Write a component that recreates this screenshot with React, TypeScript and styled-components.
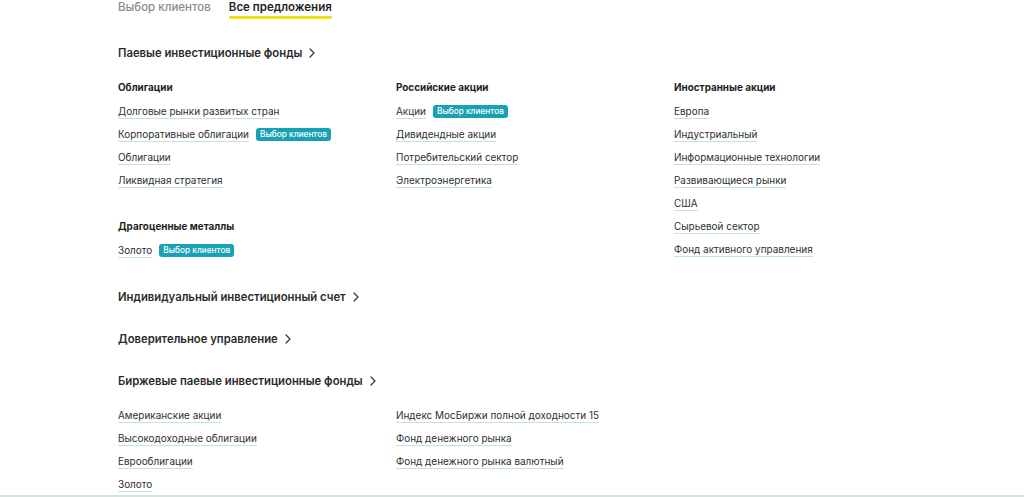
import React from "react";
import styled, { createGlobalStyle } from "styled-components";

const GlobalStyle = createGlobalStyle`
	html, body {
		margin: 0;
		padding: 0;
		background: #ffffff;
		font-family: Inter, "Noto Sans", "Liberation Sans", sans-serif;
		overflow: hidden;
	}
`;

const Page = styled.div`
	box-sizing: border-box;
	height: 497px;
	padding-left: 118px;
	border-bottom: 2px solid #d4e3df;
	overflow: hidden;
`;

const Tabs = styled.div`
	display: flex;
	gap: 18px;
`;

const Tab = styled.div<{ $active?: boolean }>`
	font-size: 11.5px;
	line-height: 14px;
	font-weight: ${(p) => (p.$active ? 600 : 500)};
	color: ${(p) => (p.$active ? "#1f1f1f" : "#8b8b8b")};
	padding-bottom: 2px;
	border-bottom: 3px solid ${(p) => (p.$active ? "#f2df14" : "transparent")};
	border-radius: 0 0 2px 2px;
`;

const Section = styled.section`
	margin-top: 24px;

	& + & {
		margin-top: 22px;
	}
`;

const SectionTitle = styled.div`
	display: flex;
	align-items: center;
	gap: 6px;
	height: 20px;
	font-size: 11.3px;
	font-weight: 600;
	color: #2b2b2b;
`;

const Columns = styled.div`
	display: grid;
	grid-template-columns: 278px 278px 278px;
	margin-top: 16px;
`;

const Column = styled.div`
	display: flex;
	flex-direction: column;
	gap: 23px;
`;

const Group = styled.div`
	display: flex;
	flex-direction: column;
`;

const GroupTitle = styled.div`
	height: 24px;
	line-height: 16px;
	font-size: 9.9px;
	font-weight: 700;
	color: #1f1f1f;
`;

const Row = styled.div`
	box-sizing: border-box;
	height: 23px;
	padding-top: 2px;
	display: flex;
	align-items: flex-start;
`;

const Link = styled.a`
	display: inline-block;
	font-size: 9.95px;
	line-height: 13px;
	color: #2f2f2f;
	text-decoration: none;
	border-bottom: 1px solid #bfe2e2;
`;

const Badge = styled.span`
	margin-left: 7px;
	padding: 0 4px;
	height: 13px;
	line-height: 13px;
	font-size: 8.3px;
	font-weight: 500;
	color: #ffffff;
	background: #18a0b4;
	border-radius: 3px;
`;

type Item = { label: string; badge?: boolean };
type GroupData = { title?: string; items: Item[] };

const Chevron = () => (
	<svg width="8" height="10" viewBox="0 0 8 10" fill="none">
		<path d="M2 1l4 4-4 4" stroke="#333" strokeWidth="1.2" strokeLinecap="round" strokeLinejoin="round" />
	</svg>
);

const LinkGroup = ({ title, items }: GroupData) => (
	<Group>
		{title && <GroupTitle>{title}</GroupTitle>}
		{items.map((it) => (
			<Row key={it.label}>
				<Link href="#">{it.label}</Link>
				{it.badge && <Badge>Выбор клиентов</Badge>}
			</Row>
		))}
	</Group>
);

const FUNDS: GroupData[][] = [
	[
		{
			title: "Облигации",
			items: [
				{ label: "Долговые рынки развитых стран" },
				{ label: "Корпоративные облигации", badge: true },
				{ label: "Облигации" },
				{ label: "Ликвидная стратегия" },
			],
		},
		{ title: "Драгоценные металлы", items: [{ label: "Золото", badge: true }] },
	],
	[
		{
			title: "Российские акции",
			items: [
				{ label: "Акции", badge: true },
				{ label: "Дивидендные акции" },
				{ label: "Потребительский сектор" },
				{ label: "Электроэнергетика" },
			],
		},
	],
	[
		{
			title: "Иностранные акции",
			items: [
				{ label: "Европа" },
				{ label: "Индустриальный" },
				{ label: "Информационные технологии" },
				{ label: "Развивающиеся рынки" },
				{ label: "США" },
				{ label: "Сырьевой сектор" },
				{ label: "Фонд активного управления" },
			],
		},
	],
];

const ETF: GroupData[][] = [
	[
		{
			items: [
				{ label: "Американские акции" },
				{ label: "Высокодоходные облигации" },
				{ label: "Еврооблигации" },
				{ label: "Золото" },
			],
		},
	],
	[
		{
			items: [
				{ label: "Индекс МосБиржи полной доходности 15" },
				{ label: "Фонд денежного рынка" },
				{ label: "Фонд денежного рынка валютный" },
			],
		},
	],
];

const ProductSection = ({ title, columns }: { title: string; columns?: GroupData[][] }) => (
	<Section>
		<SectionTitle>
			{title}
			<Chevron />
		</SectionTitle>
		{columns && (
			<Columns>
				{columns.map((groups, i) => (
					<Column key={i}>
						{groups.map((g, j) => (
							<LinkGroup key={j} {...g} />
						))}
					</Column>
				))}
			</Columns>
		)}
	</Section>
);

const App = () => {
	return (
		<>
			<GlobalStyle />
			<Page>
				<Tabs>
					<Tab>Выбор клиентов</Tab>
					<Tab $active>Все предложения</Tab>
				</Tabs>
				<ProductSection title="Паевые инвестиционные фонды" columns={FUNDS} />
				<ProductSection title="Индивидуальный инвестиционный счет" />
				<ProductSection title="Доверительное управление" />
				<ProductSection title="Биржевые паевые инвестиционные фонды" columns={ETF} />
			</Page>
		</>
	);
};

export default App;
